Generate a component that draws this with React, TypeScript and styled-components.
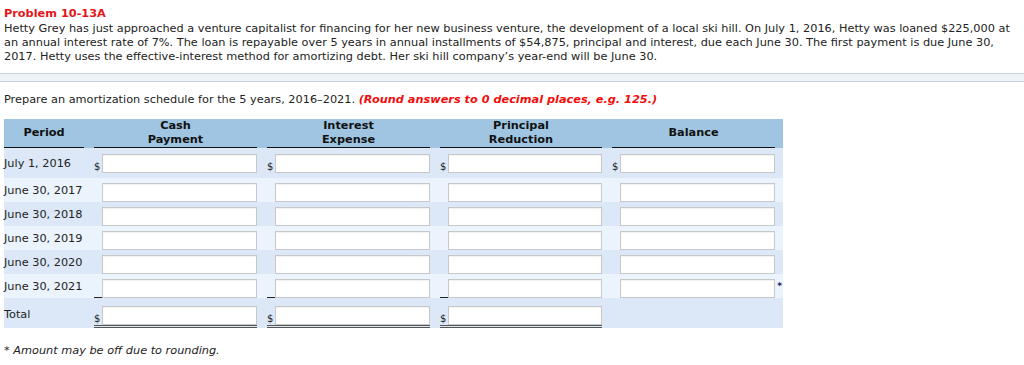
import styled, { createGlobalStyle } from "styled-components";

const GlobalStyle = createGlobalStyle`
  body {
    margin: 0;
    background: #fff;
    font-family: "DejaVu Sans", Verdana, sans-serif;
    font-size: 11.3px;
    color: #222;
  }
`;

const Page = styled.div`
  width: 1024px;
`;

const ProblemBox = styled.div`
  width: 1017px;
  padding: 7px 4px 9px;
  border-right: 1px solid #c9d1dc;
  border-bottom: 1px solid #c9d1dc;
`;

const Title = styled.div`
  color: #e3161a;
  font-weight: bold;
  line-height: 14px;
  margin-bottom: 1px;
`;

const Line = styled.div`
  line-height: 14px;
  white-space: nowrap;
`;

const Band = styled.div`
  height: 7px;
  background: #eef3f9;
  border-bottom: 1px solid #c9d1dc;
`;

const QuestionBox = styled.div`
  padding: 11px 4px 0;
`;

const Prompt = styled.div`
  line-height: 14px;
  margin-bottom: 12px;
`;

const Hint = styled.span`
  color: #f20d0d;
  font-weight: bold;
  font-style: italic;
`;

const Schedule = styled.div`
  width: 779px;
`;

const Row = styled.div<{ $shade?: "head" | "dark" | "light"; $pad?: string }>`
  display: grid;
  grid-template-columns: 80px 163px 163px 162px 163px;
  column-gap: 10px;
  padding: ${({ $pad }) => $pad ?? "5px 8px 0 0"};
  background: ${({ $shade }) =>
    $shade === "head" ? "#9fc5e2" : $shade === "light" ? "#ebf3fd" : "#dce8f7"};
`;

const HeadCell = styled.div`
  height: 28px;
  border-bottom: 1px solid #111;
  display: flex;
  align-items: center;
  justify-content: center;
  text-align: center;
  font-weight: bold;
  line-height: 14px;
  color: #111;
`;

const PeriodCell = styled.div<{ $top?: number }>`
  line-height: 14px;
  padding-top: ${({ $top }) => $top ?? 1}px;
  white-space: nowrap;
`;

const AmountCell = styled.div<{ $total?: boolean }>`
  position: relative;
  display: flex;
  align-items: flex-end;
  border-bottom: ${({ $total }) => ($total ? "3px double #555" : "none")};
`;

const Dollar = styled.span<{ $rule?: boolean }>`
  width: 8px;
  flex: none;
  align-self: stretch;
  display: flex;
  align-items: flex-end;
  font-size: 10px;
  line-height: 12px;
  border-bottom: ${({ $rule }) => ($rule ? "1px solid #222" : "none")};
`;

const Field = styled.input`
  flex: 1;
  min-width: 0;
  height: 19px;
  box-sizing: border-box;
  margin: 0;
  border: 1px solid #c8c8c8;
  box-shadow: inset 0 1px 1px rgba(0, 0, 0, 0.06);
  background: #fff;
  font: inherit;
`;

const Star = styled.span`
  position: absolute;
  right: -7px;
  top: 2px;
  color: #1b1b6b;
  font-size: 9px;
  font-weight: bold;
`;

const Footnote = styled.div`
  margin-top: 16px;
  line-height: 14px;
  font-style: italic;
`;

type Kind = "first" | "plain" | "rule";

const periods: { label: string; kind: Kind }[] = [
  { label: "July 1, 2016", kind: "first" },
  { label: "June 30, 2017", kind: "plain" },
  { label: "June 30, 2018", kind: "plain" },
  { label: "June 30, 2019", kind: "plain" },
  { label: "June 30, 2020", kind: "plain" },
  { label: "June 30, 2021", kind: "rule" },
];

const Amount = ({ kind, star }: { kind: Kind; star?: boolean }) => (
  <AmountCell>
    <Dollar $rule={kind === "rule"}>{kind === "first" ? "$" : ""}</Dollar>
    <Field type="text" />
    {star && <Star>*</Star>}
  </AmountCell>
);

export default function App() {
  return (
    <Page>
      <GlobalStyle />
      <ProblemBox>
        <Title>Problem 10-13A</Title>
        <Line>
          Hetty Grey has just approached a venture capitalist for financing for her new business venture, the development of a local ski hill. On July 1, 2016, Hetty was loaned $225,000 at
        </Line>
        <Line>
          an annual interest rate of 7%. The loan is repayable over 5 years in annual installments of $54,875, principal and interest, due each June 30. The first payment is due June 30,
        </Line>
        <Line>
          2017. Hetty uses the effective-interest method for amortizing debt. Her ski hill company’s year-end will be June 30.
        </Line>
      </ProblemBox>
      <Band />
      <QuestionBox>
        <Prompt>
          Prepare an amortization schedule for the 5 years, 2016–2021.{" "}
          <Hint>(Round answers to 0 decimal places, e.g. 125.)</Hint>
        </Prompt>
        <Schedule>
          <Row $shade="head" $pad="0 8px 0 0">
            <HeadCell>Period</HeadCell>
            <HeadCell>
              Cash
              <br />
              Payment
            </HeadCell>
            <HeadCell>
              Interest
              <br />
              Expense
            </HeadCell>
            <HeadCell>
              Principal
              <br />
              Reduction
            </HeadCell>
            <HeadCell>Balance</HeadCell>
          </Row>
          {periods.map((p, i) => {
            const first = i === 0;
            const last = i === periods.length - 1;
            return (
              <Row
                key={p.label}
                $shade={i % 2 === 0 ? "dark" : "light"}
                $pad={first ? "6px 8px 5px 0" : "5px 8px 0 0"}
              >
                <PeriodCell $top={first ? 3 : 1}>{p.label}</PeriodCell>
                <Amount kind={p.kind} />
                <Amount kind={p.kind} />
                <Amount kind={p.kind} />
                <Amount kind={last ? "plain" : p.kind} star={last} />
              </Row>
            );
          })}
          <Row $shade="dark" $pad="8px 8px 0 0">
            <PeriodCell $top={2}>Total</PeriodCell>
            <AmountCell $total>
              <Dollar>$</Dollar>
              <Field type="text" />
            </AmountCell>
            <AmountCell $total>
              <Dollar>$</Dollar>
              <Field type="text" />
            </AmountCell>
            <AmountCell $total>
              <Dollar>$</Dollar>
              <Field type="text" />
            </AmountCell>
            <div />
          </Row>
        </Schedule>
        <Footnote>* Amount may be off due to rounding.</Footnote>
      </QuestionBox>
    </Page>
  );
}
